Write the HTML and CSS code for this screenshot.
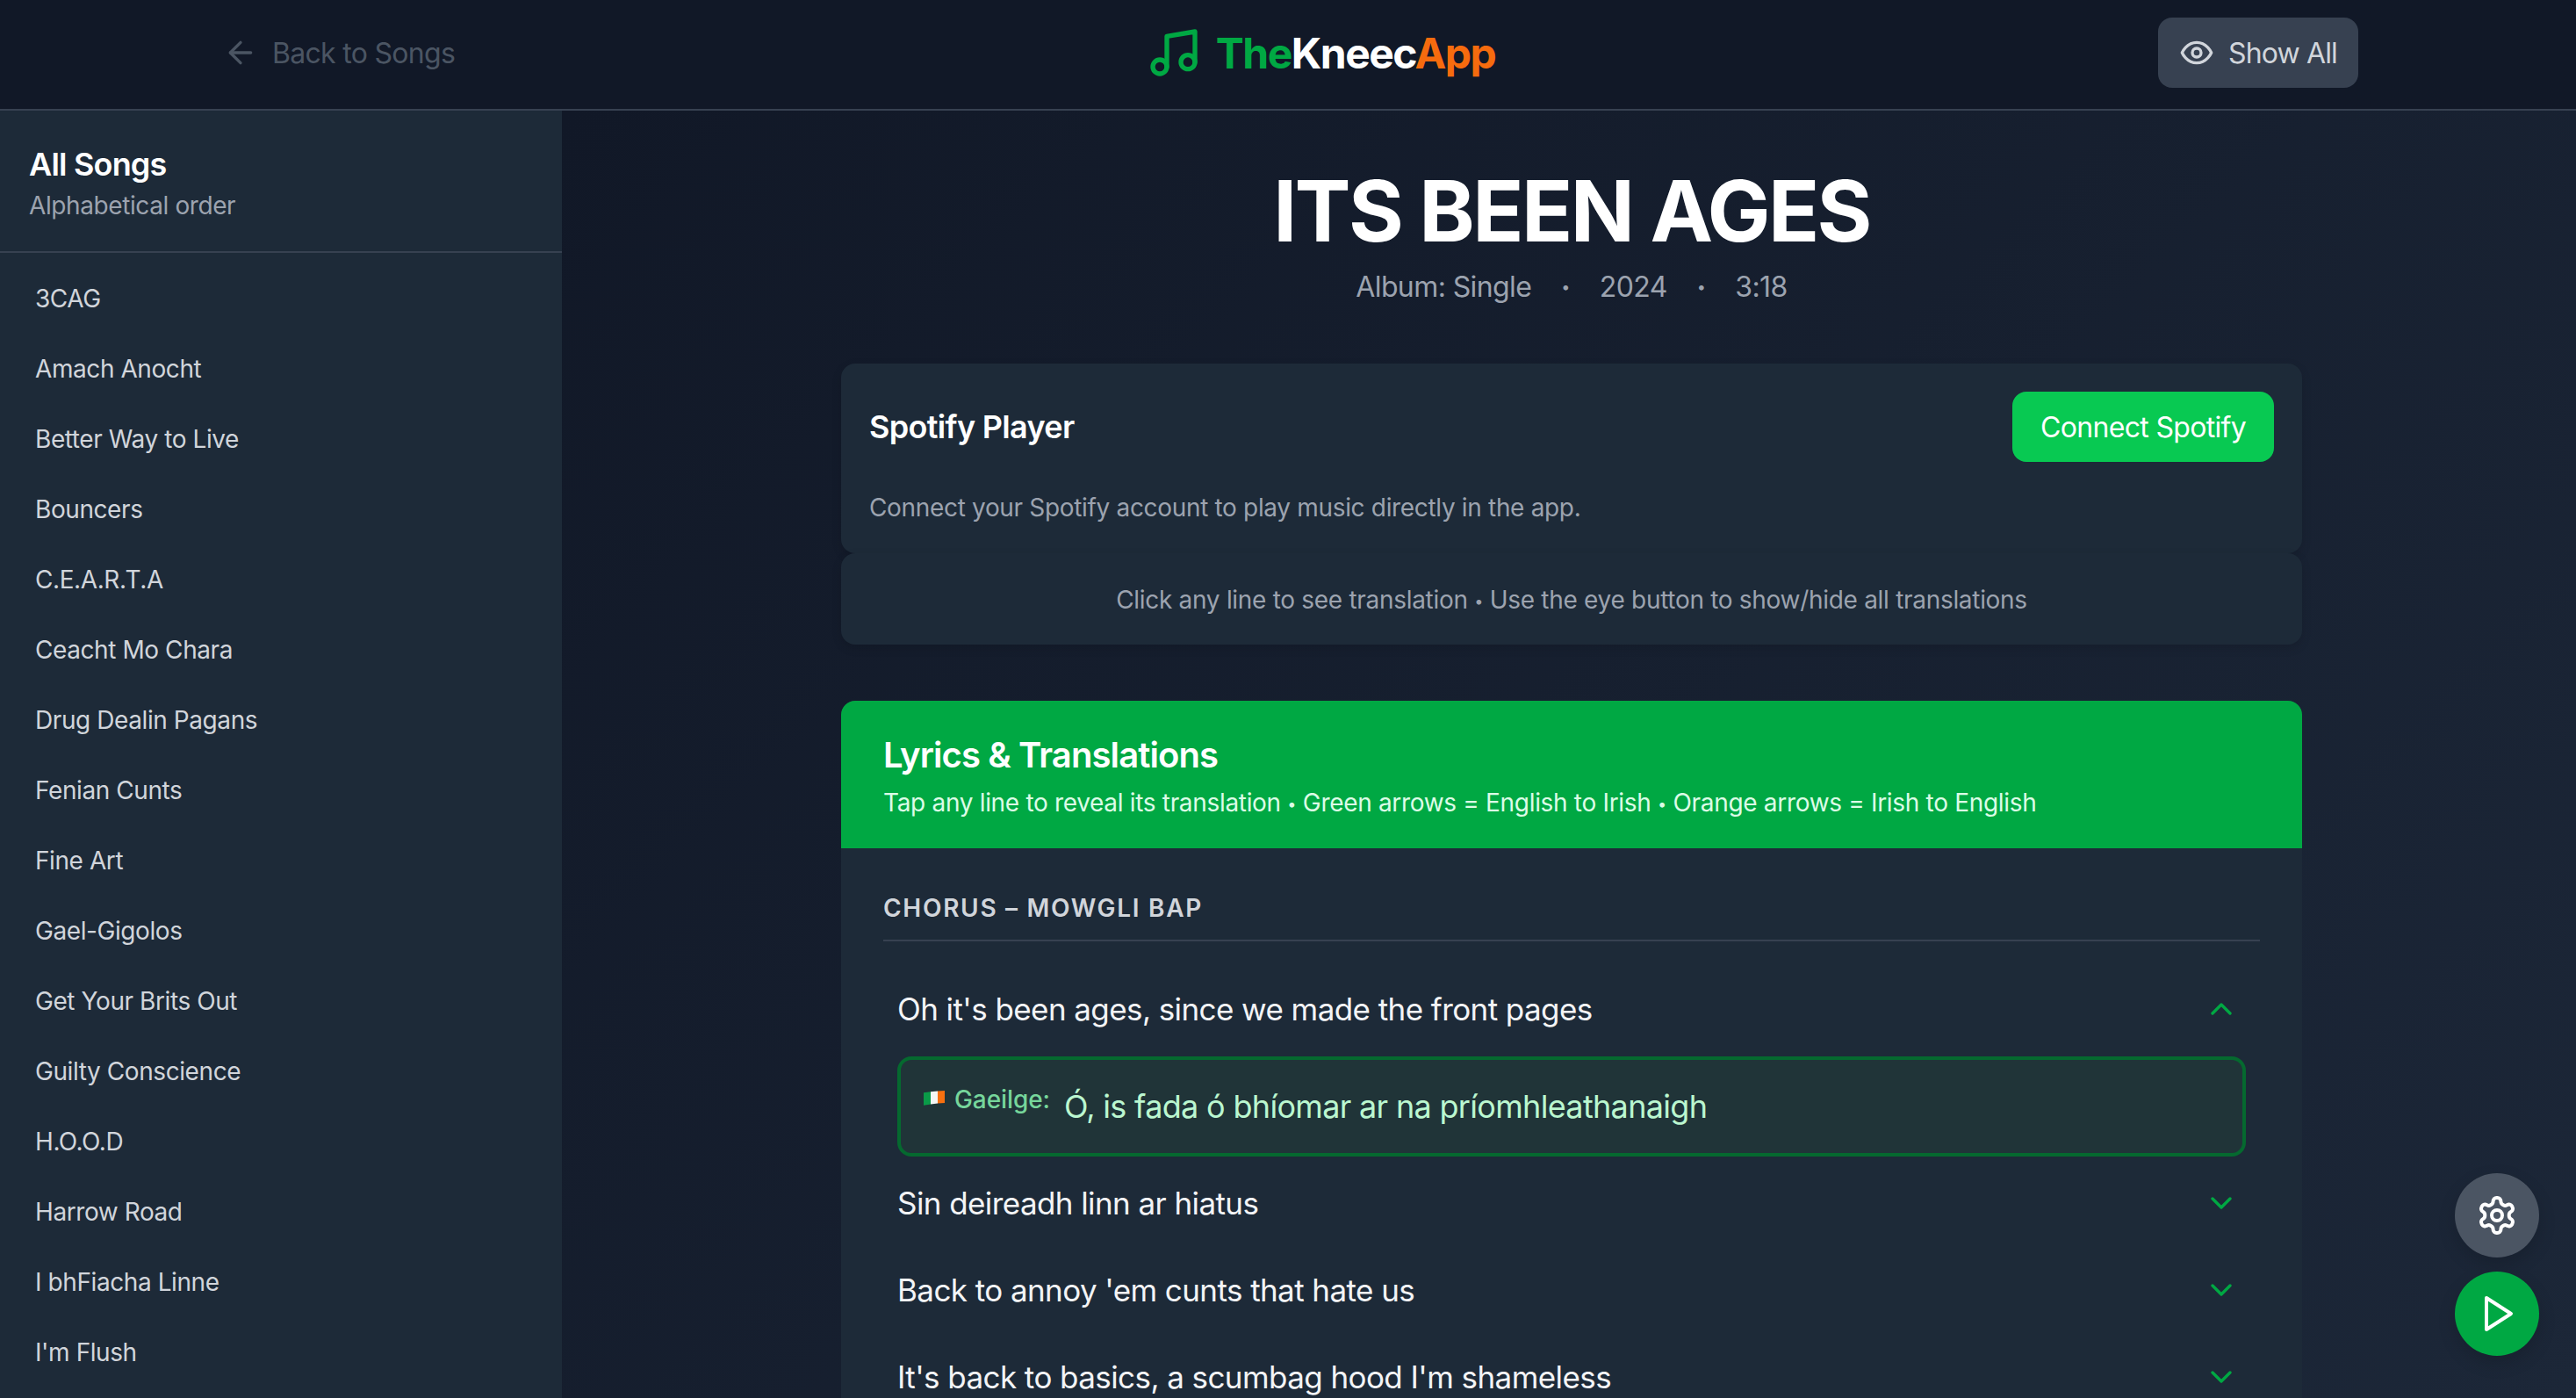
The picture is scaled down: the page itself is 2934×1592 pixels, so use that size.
FILE: index.html
```html
<!DOCTYPE html>
<html lang="en">
<head>
    <meta charset="UTF-8">
    <meta name="viewport" content="width=device-width, initial-scale=1.0">
    <title>TheKneecApp - Its Been Ages</title>
    <link rel="stylesheet" href="styles.css">
</head>
<body>
    <header class="topbar">
        <a class="back-link" href="#">
            <svg class="icon icon-back" viewBox="0 0 24 24"><path d="m12 19-7-7 7-7"/><path d="M19 12H5"/></svg>
            <span>Back to Songs</span>
        </a>
        <div class="logo">
            <svg class="icon icon-logo" viewBox="0 0 24 24"><path d="M9 18V5l12-2v13"/><circle cx="6" cy="18" r="3"/><circle cx="18" cy="16" r="3"/></svg>
            <span class="logo-text"><span class="logo-green">The</span>Kneec<span class="logo-orange">App</span></span>
        </div>
        <button class="show-all">
            <svg class="icon icon-eye" viewBox="0 0 24 24"><path d="M2 12s3-7 10-7 10 7 10 7-3 7-10 7-10-7-10-7Z"/><circle cx="12" cy="12" r="3"/></svg>
            <span>Show All</span>
        </button>
    </header>

    <div class="layout">
        <aside class="sidebar">
            <div class="sidebar-head">
                <h2>All Songs</h2>
                <p>Alphabetical order</p>
            </div>
            <ul class="song-list">
                <li>3CAG</li>
                <li>Amach Anocht</li>
                <li>Better Way to Live</li>
                <li>Bouncers</li>
                <li>C.E.A.R.T.A</li>
                <li>Ceacht Mo Chara</li>
                <li>Drug Dealin Pagans</li>
                <li>Fenian Cunts</li>
                <li>Fine Art</li>
                <li>Gael-Gigolos</li>
                <li>Get Your Brits Out</li>
                <li>Guilty Conscience</li>
                <li>H.O.O.D</li>
                <li>Harrow Road</li>
                <li>I bhFiacha Linne</li>
                <li>I'm Flush</li>
            </ul>
        </aside>

        <main class="main">
            <div class="content">
                <h1 class="song-title">ITS BEEN AGES</h1>
                <div class="song-meta">
                    <span>Album: Single</span>
                    <span class="dot">•</span>
                    <span>2024</span>
                    <span class="dot">•</span>
                    <span>3:18</span>
                </div>

                <section class="card spotify">
                    <div class="spotify-head">
                        <h3>Spotify Player</h3>
                        <button class="connect">Connect Spotify</button>
                    </div>
                    <p>Connect your Spotify account to play music directly in the app.</p>
                </section>
                <section class="card hint">Click any line to see translation <span class="sep">•</span> Use the eye button to show/hide all translations</section>

                <section class="lyrics">
                    <div class="lyrics-head">
                        <h2>Lyrics &amp; Translations</h2>
                        <p>Tap any line to reveal its translation <span class="sep">•</span> Green arrows = English to Irish <span class="sep">•</span> Orange arrows = Irish to English</p>
                    </div>
                    <div class="lyrics-body">
                        <h4 class="section-title">CHORUS – MOWGLI BAP</h4>
                        <div class="line line-open">
                            <span>Oh it's been ages, since we made the front pages</span>
                            <svg class="icon icon-chevron" viewBox="0 0 24 24"><path d="m18 15-6-6-6 6"/></svg>
                        </div>
                        <div class="translation">
                            <span class="translation-label">
                                <svg class="flag" viewBox="0 0 24 17"><path fill="#0a9a48" d="M0 2.2 8 1.2V15.6L0 16.8Z"/><path fill="#f4f6f4" d="M8 1.2 16 .4V14.6L8 15.6Z"/><path fill="#f7700f" d="M16 .4 24 0V14L16 14.6Z"/></svg>
                                Gaeilge:
                            </span>
                            <span class="translation-text">Ó, is fada ó bhíomar ar na príomhleathanaigh</span>
                        </div>
                        <div class="line">
                            <span>Sin deireadh linn ar hiatus</span>
                            <svg class="icon icon-chevron" viewBox="0 0 24 24"><path d="m6 9 6 6 6-6"/></svg>
                        </div>
                        <div class="line">
                            <span>Back to annoy 'em cunts that hate us</span>
                            <svg class="icon icon-chevron" viewBox="0 0 24 24"><path d="m6 9 6 6 6-6"/></svg>
                        </div>
                        <div class="line">
                            <span>It's back to basics, a scumbag hood I'm shameless</span>
                            <svg class="icon icon-chevron" viewBox="0 0 24 24"><path d="m6 9 6 6 6-6"/></svg>
                        </div>
                    </div>
                </section>
            </div>
        </main>
    </div>

    <div class="fab-stack">
        <button class="fab fab-settings">
            <svg class="icon icon-fab" viewBox="0 0 24 24"><path d="M12.22 2h-.44a2 2 0 0 0-2 2v.18a2 2 0 0 1-1 1.73l-.43.25a2 2 0 0 1-2 0l-.15-.08a2 2 0 0 0-2.73.73l-.22.38a2 2 0 0 0 .73 2.73l.15.1a2 2 0 0 1 1 1.72v.51a2 2 0 0 1-1 1.74l-.15.09a2 2 0 0 0-.73 2.73l.22.38a2 2 0 0 0 2.73.73l.15-.08a2 2 0 0 1 2 0l.43.25a2 2 0 0 1 1 1.73V20a2 2 0 0 0 2 2h.44a2 2 0 0 0 2-2v-.18a2 2 0 0 1 1-1.73l.43-.25a2 2 0 0 1 2 0l.15.08a2 2 0 0 0 2.73-.73l.22-.39a2 2 0 0 0-.73-2.73l-.15-.08a2 2 0 0 1-1-1.74v-.5a2 2 0 0 1 1-1.74l.15-.09a2 2 0 0 0 .73-2.73l-.22-.38a2 2 0 0 0-2.73-.73l-.15.08a2 2 0 0 1-2 0l-.43-.25a2 2 0 0 1-1-1.73V4a2 2 0 0 0-2-2z"/><circle cx="12" cy="12" r="3"/></svg>
        </button>
        <button class="fab fab-play">
            <svg class="icon icon-fab icon-play" viewBox="0 0 24 24"><polygon points="5 3 19 12 5 21 5 3"/></svg>
        </button>
    </div>
</body>
</html>
```

FILE: styles.css
```css
* {
    box-sizing: border-box;
}
html, body {
    margin: 0;
    height: 100%;
    overflow: hidden;
    font-family: 'Inter', 'Liberation Sans', sans-serif;
    color: #fff;
    background: #111827;
}
h1, h2, h3, h4, p, ul {
    margin: 0;
    padding: 0;
}
button {
    font-family: inherit;
    border: none;
    cursor: pointer;
}
.icon {
    display: block;
    flex: none;
    fill: none;
    stroke: currentColor;
    stroke-width: 2;
    stroke-linecap: round;
    stroke-linejoin: round;
}
.sep {
    font-size: 0.65em;
    vertical-align: 0.1em;
}

/* Top bar */
.topbar {
    display: flex;
    align-items: center;
    justify-content: space-between;
    height: 126px;
    padding: 0 248px 4px 254px;
    background: #111827;
    border-bottom: 2px solid #374151;
}
.back-link {
    display: flex;
    align-items: center;
    gap: 16px;
    font-size: 32px;
    letter-spacing: -0.7px;
    color: #4b5563;
    text-decoration: none;
}
.icon-back {
    width: 40px;
    height: 40px;
}
.logo {
    display: flex;
    align-items: center;
    gap: 16px;
    margin-left: 32px;
}
.icon-logo {
    width: 64px;
    height: 64px;
    color: #00a843;
}
.logo-text {
    font-size: 48px;
    font-weight: 700;
    letter-spacing: -1.5px;
}
.logo-green { color: #00a843; }
.logo-orange { color: #f66b0e; }
.show-all {
    display: flex;
    align-items: center;
    gap: 16px;
    height: 80px;
    padding: 0 24px;
    border-radius: 16px;
    background: #374151;
    color: #d1d5db;
    font-size: 32px;
    letter-spacing: -0.85px;
}
.icon-eye {
    width: 40px;
    height: 40px;
}

/* Page layout */
.layout {
    display: flex;
    height: calc(100% - 126px);
}
.sidebar {
    flex: none;
    width: 640px;
    background: #1d2a38;
}
.sidebar-head {
    padding: 34px 33px 32px;
    border-bottom: 2px solid #374151;
}
.sidebar-head h2 {
    font-size: 36px;
    font-weight: 600;
    line-height: 54px;
    letter-spacing: -0.8px;
}
.sidebar-head p {
    font-size: 28px;
    line-height: 40px;
    letter-spacing: -0.4px;
    color: #9ca3af;
}
.song-list {
    list-style: none;
    padding-top: 12px;
}
.song-list li {
    padding: 0 40px;
    font-size: 28px;
    line-height: 80px;
    letter-spacing: -0.42px;
    color: #d1d5db;
}

/* Main column */
.main {
    flex: 1;
    min-width: 0;
    padding: 60px 0 0 6px;
    background: linear-gradient(135deg, #111827, #1c2738);
}
.content {
    width: 1664px;
    margin: 0 auto;
}
.song-title {
    font-size: 96px;
    font-weight: 700;
    line-height: 108px;
    letter-spacing: -2.6px;
    text-align: center;
}
.song-meta {
    display: flex;
    justify-content: center;
    gap: 34px;
    margin-top: 9px;
    font-size: 32px;
    line-height: 48px;
    letter-spacing: -0.6px;
    color: #9ca3af;
}
.song-meta .dot {
    font-size: 18px;
}
.card {
    background: #1d2a38;
    border-radius: 16px;
    box-shadow: 0 4px 12px rgba(0, 0, 0, 0.12);
}
.spotify {
    margin-top: 63px;
    padding: 32px 32px 30px;
}
.spotify-head {
    display: flex;
    align-items: center;
    justify-content: space-between;
}
.spotify-head h3 {
    font-size: 36px;
    font-weight: 600;
    letter-spacing: -0.67px;
}
.connect {
    height: 80px;
    padding: 0 32px;
    border-radius: 16px;
    background: #08c952;
    color: #fff;
    font-size: 32px;
    letter-spacing: -0.68px;
}
.spotify p {
    margin-top: 30px;
    font-size: 28px;
    line-height: 44px;
    letter-spacing: -0.33px;
    color: #9ca3af;
}
.hint {
    height: 104px;
    font-size: 28px;
    line-height: 106px;
    letter-spacing: -0.3px;
    text-align: center;
    color: #9ca3af;
}

/* Lyrics */
.lyrics {
    margin-top: 64px;
    border-radius: 16px 16px 0 0;
    overflow: hidden;
    background: #1d2a38;
}
.lyrics-head {
    padding: 34px 48px 29px;
    background: #00a843;
}
.lyrics-head h2 {
    font-size: 40px;
    font-weight: 600;
    line-height: 56px;
    letter-spacing: -0.9px;
}
.lyrics-head p {
    margin-top: 4px;
    font-size: 28px;
    line-height: 44px;
    letter-spacing: -0.32px;
    color: #dcfce7;
}
.lyrics-body {
    padding: 47px 48px 0;
}
.section-title {
    padding-bottom: 15px;
    margin-bottom: 35px;
    border-bottom: 2px solid #374151;
    font-size: 28px;
    font-weight: 600;
    line-height: 42px;
    letter-spacing: 1.7px;
    color: #d1d5db;
}
.line {
    display: flex;
    align-items: center;
    justify-content: space-between;
    height: 83px;
    margin-bottom: 16px;
    padding: 0 24px 0 16px;
    font-size: 35px;
    letter-spacing: -0.58px;
    color: #f3f4f6;
}
.line-open {
    margin-bottom: 13px;
}
.icon-chevron {
    width: 40px;
    height: 40px;
    color: #00a843;
}
.translation {
    display: flex;
    align-items: flex-start;
    gap: 16px;
    margin: 0 16px 11px;
    padding: 26px 26px;
    border: 4px solid #05692f;
    border-radius: 16px;
    background: #203438;
}
.translation-label {
    display: flex;
    align-items: center;
    gap: 11px;
    margin-top: -2px;
    font-size: 28px;
    font-weight: 500;
    line-height: 42px;
    letter-spacing: -0.1px;
    color: #76d69b;
}
.flag {
    width: 24px;
    height: 17px;
    margin-top: -4px;
}
.translation-text {
    font-size: 36px;
    line-height: 54px;
    letter-spacing: -0.68px;
    color: #bbf7d0;
}

/* Floating buttons */
.fab-stack {
    position: fixed;
    right: 42px;
    bottom: 48px;
    display: flex;
    flex-direction: column;
    gap: 16px;
}
.fab {
    display: flex;
    align-items: center;
    justify-content: center;
    width: 96px;
    height: 96px;
    border-radius: 50%;
    color: #fff;
    box-shadow: 0 8px 20px rgba(0, 0, 0, 0.15);
}
.fab-settings { background: #4b5563; }
.fab-play { background: #00a843; }
.icon-fab {
    width: 48px;
    height: 48px;
}
.icon-play {
    margin-left: 4px;
}
```
